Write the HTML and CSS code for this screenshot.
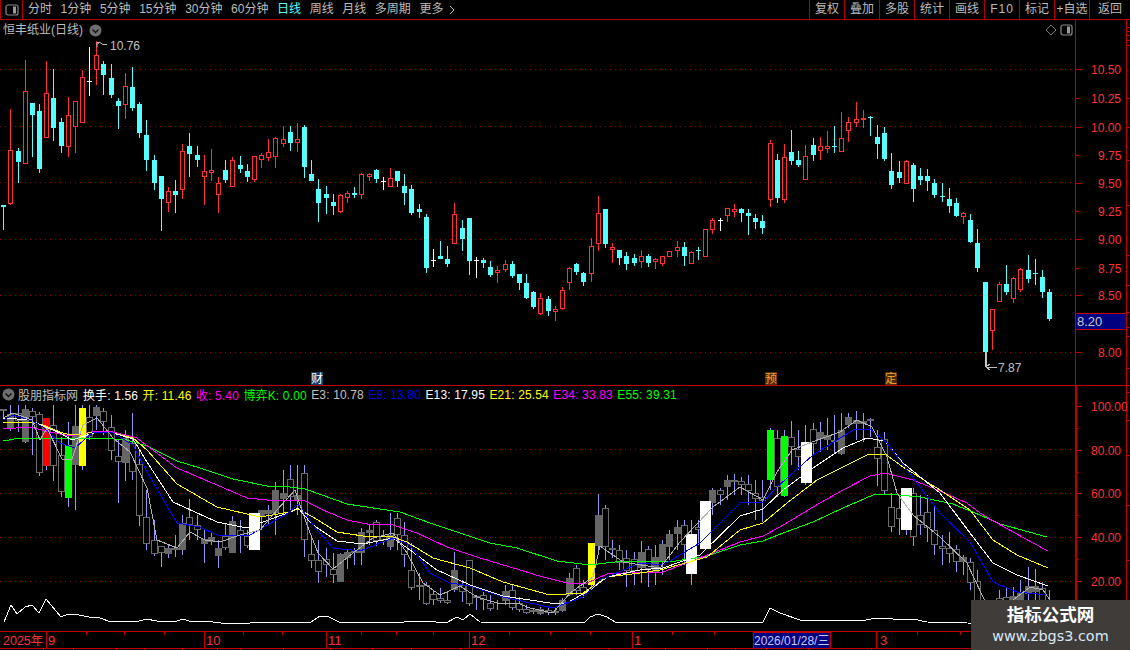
FILE: index.html
```html
<!DOCTYPE html>
<html lang="zh">
<head>
<meta charset="utf-8">
<title>恒丰纸业(日线)</title>
<link rel="stylesheet" href="styles.css">
</head>
<body>
<div class="app">
  <header class="toolbar">
    <div class="toggle">
      <svg width="14" height="12" viewBox="0 0 14 12"><rect x="1" y="1" width="12" height="10" rx="2" class="ico-line"/><rect x="8" y="2.5" width="3" height="7" class="ico-fill"/></svg>
    </div>
    <nav class="periods">
      <span>分时</span><span>1分钟</span><span>5分钟</span><span>15分钟</span><span>30分钟</span><span>60分钟</span><span class="active">日线</span><span>周线</span><span>月线</span><span>多周期</span>
      <span class="more">更多<svg width="6" height="10" viewBox="0 0 6 10"><path d="M1 1 5 5 1 9" class="chev"/></svg></span>
    </nav>
    <nav class="actions">
      <span>复权</span><span>叠加</span><span>多股</span><span>统计</span><span>画线</span><span class="wide">F10</span><span>标记</span><span>+自选</span><span class="last">返回</span>
    </nav>
  </header>

  <section class="pane pane-main">
    <svg id="main-chart" class="chart" width="1075" height="366" viewBox="0 20 1075 366"></svg>
    <svg id="main-axis" class="axis" width="55" height="366" viewBox="1075 20 55 366"></svg>
    <div class="pane-title">
      <span>恒丰纸业(日线)</span>
      <svg class="round" width="13" height="13" viewBox="0 0 13 13"><circle cx="6.5" cy="6.5" r="6" class="round-bg"/><path d="M3.5 5.5 6.5 8.500 9.500 5.500" class="round-mark"/></svg>
    </div>
    <div class="pane-tools">
      <svg width="12" height="12" viewBox="0 0 12 12"><path d="M6 1 11 6 6 11 1 6Z" class="ico-thin"/></svg>
      <svg width="13" height="12" viewBox="0 0 13 12"><rect x="1" y="1" width="11" height="10" rx="2" class="ico-line"/><rect x="7" y="2.5" width="3" height="7" class="ico-fill"/></svg>
    </div>
  </section>

  <section class="pane pane-sub">
    <svg id="sub-chart" class="chart" width="1075" height="245" viewBox="0 386 1075 245"></svg>
    <svg id="sub-axis" class="axis" width="55" height="245" viewBox="1075 386 55 245"></svg>
    <div class="legend">
      <svg class="round" width="13" height="13" viewBox="0 0 13 13"><circle cx="6.5" cy="6.5" r="6" class="round-bg"/><path d="M3.5 5.5 6.5 8.500 9.500 5.500" class="round-mark"/></svg>
      <span class="lg-name">股朋指标网</span>
      <span class="lg-white">换手: 1.56</span>
      <span class="lg-yellow">开: 11.46</span>
      <span class="lg-magenta">收: 5.40</span>
      <span class="lg-green">博弈K: 0.00</span>
      <span class="lg-grey">E3: 10.78</span>
      <span class="lg-blue">E8: 13.80</span>
      <span class="lg-white">E13: 17.95</span>
      <span class="lg-yellow">E21: 25.54</span>
      <span class="lg-magenta">E34: 33.83</span>
      <span class="lg-green">E55: 39.31</span>
    </div>
  </section>

  <footer class="timeline">
    <svg id="time-axis" width="1130" height="19" viewBox="0 631 1130 19"></svg>
  </footer>

  <aside class="watermark">
    <strong>指标公式网</strong>
    <span>www.zbgs3.com</span>
  </aside>
</div>
<script src="script.js"></script>
</body>
</html>
```

FILE: styles.css
```css
* { box-sizing: border-box; }
html, body { margin: 0; padding: 0; background: #000; }
body {
  width: 1130px; height: 650px; overflow: hidden;
  font-family: "Liberation Sans", "Noto Sans CJK SC", sans-serif;
  font-size: 12px; color: #bcbcbc;
}
.app { position: relative; width: 1130px; height: 650px; display: flex; flex-direction: column; }

.toolbar { height: 20px; display: flex; align-items: stretch; border-bottom: 1px solid #b00000; flex: none; }
.toggle { width: 23px; display: flex; align-items: center; justify-content: center; border-right: 1px solid #b00000; border-left: 1px solid #b00000; }
.periods { display: flex; align-items: center; gap: 8.6px; padding-left: 5px; line-height: 19px; }
.periods .active { color: #55ffff; }
.more { display: flex; align-items: center; gap: 6px; }
.chev { fill: none; stroke: #bcbcbc; stroke-width: 1; }
.actions { margin-left: auto; display: flex; }
.actions span { width: 35px; border-left: 1px solid #b00000; text-align: center; line-height: 19px; }
.actions .wide { letter-spacing: 1px; }
.actions .last { width: 41px; }

.ico-line { fill: none; stroke: #8a8a8a; stroke-width: 1.2; }
.ico-fill { fill: #9a9a9a; }
.ico-thin { fill: none; stroke: #777; stroke-width: 1; }
.round-bg { fill: #6e6e6e; }
.round-mark { fill: none; stroke: #111; stroke-width: 1.4; }

.pane { position: relative; display: flex; flex: none; }
.pane-main { height: 366px; }
.pane-sub { height: 245px; }
.chart, .axis { display: block; flex: none; }

.pane-title { position: absolute; left: 3px; top: 1px; display: flex; align-items: center; gap: 6px; font-size: 12px; line-height: 18px; }
.pane-tools { position: absolute; right: 57px; top: 4px; display: flex; align-items: center; gap: 3px; }

.legend { position: absolute; left: 2px; top: 0; height: 17px; display: flex; align-items: center; font-size: 12px; letter-spacing: 0.15px; white-space: nowrap; }
.legend span { margin-left: 4.4px; }
.legend .lg-name { margin-left: 3px; margin-right: 0.5px; color: #c0c0c0; letter-spacing: 0; }
.lg-white { color: #fff; }
.lg-yellow { color: #ffff00; }
.lg-magenta { color: #ff00ff; }
.lg-green { color: #00ff00; }
.lg-grey { color: #c0c0c0; }
.lg-blue { color: #0000e6; }

.timeline { height: 19px; flex: none; }
.timeline svg { display: block; }

.watermark {
  position: absolute; left: 971px; top: 600px; width: 159px; height: 50px;
  background: #403c3a; display: flex; flex-direction: column; align-items: center;
  padding-top: 4px;
}
.watermark strong { font-size: 17.5px; line-height: 22px; color: #fff; font-weight: 700; }
.watermark span { line-height: 20px; color: #dbe8f5; font-family: "DejaVu Sans", sans-serif; font-size: 14.4px; }

/* drawn marks */
.line { fill: none; stroke-width: 1; }
.grid { stroke: #a00000; stroke-dasharray: 1 4; shape-rendering: crispEdges; }
.axis-text { fill: #ff3232; font-size: 12px; }
.now-text { fill: #c8c8c8; font-size: 13px; }
.time-text { fill: #ff3232; font-size: 13px; }
.year-text { fill: #ff3232; font-size: 12.5px; }
.date-text { fill: #c8c8ff; font-size: 12px; }
.note-text { fill: #c0c0c0; font-size: 12px; }
.badge-text { font-size: 12px; text-anchor: middle; }
.badge-blue { fill: #fff; }
.badge-orange { fill: #ff9a28; }
```

FILE: script.js
```js
var RED = '#ff3232', CYAN = '#55ffff', AX = '#c00000';
function X(i) { return Math.round(3.2 + 7.163 * i); }
function ln(x1, y1, x2, y2, c, cls) {
  return '<line x1="' + x1 + '" y1="' + y1 + '" x2="' + x2 + '" y2="' + y2 + '" stroke="' + c + '"' + (cls ? ' class="' + cls + '"' : ' shape-rendering="crispEdges"') + '/>';
}
function box(x, y, w, h, fill, stroke) {
  return '<rect x="' + x + '" y="' + y + '" width="' + w + '" height="' + h + '" fill="' + fill + '"' + (stroke ? ' stroke="' + stroke + '"' : '') + ' shape-rendering="crispEdges"/>';
}
function poly(pts, c) {
  return '<polyline class="line" stroke="' + c + '" shape-rendering="crispEdges" points="' + pts + '"/>';
}
function txt(x, y, s, cls) {
  return '<text x="' + x + '" y="' + y + '" class="' + cls + '">' + s + '</text>';
}

/* main candles: type, high, body top, body bottom, low */
var K = [
['c',205,205,207,230],['r',109,150,204,205],['c',148,151,162,183],['r',60,91,164,164],['c',103,103,115,157],
['c',104,111,169,173],['r',61,93,138,138],['c',69,98,128,141],['c',118,122,146,153],['r',97,115,147,157],
['r',101,101,127,153],['r',70,77,123,123],['w',47,81,81,96],['r',41,55,70,85],['c',61,64,75,95],
['c',64,78,95,98],['c',98,101,106,129],['r',73,86,105,119],['c',67,87,108,111],['c',102,104,133,138],
['c',120,135,160,171],['c',155,160,183,190],['c',176,176,199,231],['r',187,191,203,212],['c',180,191,195,213],
['r',144,151,190,199],['c',133,146,154,177],['c',146,155,160,167],['r',155,171,177,205],['r',149,170,173,181],
['r',177,183,195,213],['c',160,170,180,183],['r',157,160,187,187],['c',156,165,169,173],['c',164,171,177,182],
['r',156,156,180,182],['r',153,155,160,168],['r',139,152,158,161],['r',137,138,157,168],['r',126,139,144,147],
['c',126,132,143,151],['r',123,139,143,152],['c',125,127,167,178],['c',160,174,181,181],['c',179,189,203,222],
['c',186,194,198,214],['c',194,202,206,215],['r',194,195,212,213],['r',191,193,198,203],['c',187,193,195,198],
['r',173,174,195,199],['r',173,174,177,181],['c',169,170,179,183],['w',177,181,181,190],['r',168,178,187,187],
['c',171,171,181,187],['c',174,186,193,205],['c',185,189,213,215],['c',204,209,212,218],['c',214,217,268,273],
['w',249,260,260,267],['c',241,256,259,259],['c',246,259,264,267],['r',203,214,244,244],['c',220,228,239,251],
['c',218,218,261,275],['w',257,260,260,278],['c',258,260,263,268],['c',261,267,275,277],['r',266,270,273,283],
['r',260,264,270,272],['c',261,264,276,278],['c',274,274,283,290],['c',274,283,298,299],['c',291,292,307,309],
['r',293,298,314,315],['c',296,299,311,316],['r',306,309,312,321],['r',287,290,309,310],['r',267,268,283,290],
['c',263,264,272,275],['c',272,273,282,286],['r',238,246,274,282],['r',196,213,244,251],
['c',209,209,244,248],['r',243,247,250,263],['c',250,250,258,265],['c',252,256,264,270],['c',254,258,263,266],
['r',250,256,262,268],['c',254,256,263,267],['r',258,259,262,269],['r',256,256,264,266],['r',251,251,257,257],
['r',241,247,251,257],['c',242,247,256,266],['r',251,252,264,264],['d',247,250,250,260],['r',229,229,257,257],
['r',218,220,230,234],['w',218,220,220,231],['r',208,208,216,222],['r',204,209,212,217],['c',208,209,213,222],
['c',209,213,216,235],['c',214,218,222,229],['c',215,221,228,234],['r',140,143,200,207],['c',154,160,198,203],
['r',144,157,200,203],['c',130,152,161,165],['c',151,160,165,167],['r',145,156,180,180],['c',138,145,155,161],
['r',137,146,151,160],['r',131,146,149,153],['d',126,146,146,153],['r',112,138,152,152],['r',117,122,131,142],
['r',102,119,123,127],['R',110,118,120,128],['d',116,117,117,136],['c',125,137,144,159],['c',127,133,159,161],
['c',153,171,185,189],['c',161,172,178,183],['r',160,161,184,184],['c',163,165,189,202],['c',168,176,180,185],
['c',169,176,181,191],['c',179,183,195,198],['d',183,196,196,202],['c',188,199,206,213],['c',198,203,216,217],
['r',212,213,217,224],['c',214,220,242,243],['c',229,243,268,272],['c',282,282,352,367],['r',309,309,331,350],
['r',282,284,302,302],['c',265,284,292,295],['r',277,278,299,303],['r',268,269,290,292],['c',255,270,279,283],
['d',259,273,273,285],['c',270,277,292,298],['c',289,292,319,321]
];

var main = '';
[69, 126, 182, 239, 295, 352].forEach(function (y) { main += ln(0, y + .5, 1075, y + .5, '', 'grid'); });
K.forEach(function (k, i) {
  var t = k[0], x = X(i), hi = k[1], top = k[2], bot = k[3], lo = k[4];
  if (t === 'c') {
    main += box(x, hi, 1, lo - hi, CYAN) + box(x - 2, top, 5, bot - top, CYAN);
  } else if (t === 'r') {
    main += box(x, hi, 1, top - hi, RED) + box(x, bot, 1, lo - bot, RED);
    main += box(x - 1.5, top + .5, 4, bot - top - 1, '#000', RED);
  } else if (t === 'R') {
    main += box(x, hi, 1, lo - hi, RED) + box(x - 2, top, 5, bot - top, RED);
  } else {
    var c = t === 'w' ? '#fff' : CYAN;
    main += box(x, hi, 1, lo - hi, c) + box(x - 2, top, 5, 1, c);
  }
});
/* high / low notes */
main += '<path d="M97 47V42.5H100L103 44.5H107M100 42 97.500 44" fill="none" stroke="#c0c0c0"/>' + txt(110, 50, '10.76', 'note-text');
main += '<path d="M986 352V367M986 367H997M990 364 986 367 990 370" fill="none" stroke="#c0c0c0" shape-rendering="crispEdges"/>' + txt(998, 372, '7.87', 'note-text');
/* event badges */
main += box(311, 372, 12, 13, '#123a66') + txt(317, 383, '财', 'badge-text badge-blue');
main += box(765, 372, 12, 13, '#4a2c08') + txt(771, 383, '预', 'badge-text badge-orange');
main += box(885, 372, 12, 13, '#4a2c08') + txt(891, 383, '定', 'badge-text badge-orange');
main += ln(0, 385.5, 1075, 385.5, AX);
document.getElementById('main-chart').innerHTML = main;

var ax = ln(1075.5, 20, 1075.5, 386, AX) + ln(1126.5, 20, 1126.5, 386, AX);
[['10.50', 69], ['10.25', 98], ['10.00', 127], ['9.75', 155], ['9.50', 183], ['9.25', 211], ['9.00', 239], ['8.75', 268], ['8.50', 295], ['8.00', 352]].forEach(function (a) {
  var long = ['10.50', '10.00', '9.50', '9.00', '8.50', '8.00'].indexOf(a[0]) >= 0;
  ax += ln(1076, a[1] + .5, long ? 1082 : 1079, a[1] + .5, AX);
  ax += txt(a[0].length > 4 ? 1091 : 1098, a[1] + 5, a[0], 'axis-text');
});
[27, 31, 35, 40, 45, 98, 127, 160, 205, 255, 285, 312, 327, 336, 368].forEach(function (y) { ax += ln(1127, y + .5, 1130, y + .5, AX); });
ax += box(1076, 313, 50, 16, '#000080') + ln(1076, 313.5, 1127, 313.5, AX) + ln(1076, 329.5, 1127, 329.5, AX);
ax += txt(1077, 326, '8.20', 'now-text');
ax += ln(1075, 385.5, 1130, 385.5, AX);
document.getElementById('main-axis').innerHTML = ax;

/* lower panel candles: index, high, top, bottom, low, filled */
var S = [
[0,409,409,411,418,1],[1,405,414,429,431,1],[2,405,413,421,432,0],[3,405,409,442,443,1],[4,408,411,417,455,0],
[5,412,414,473,476,0],[6,420,425,466,470,0],[7,405,425,466,481,0],[8,437,455,492,497,0],[9,422,450,490,507,0],
[10,405,426,465,510,1],[11,405,416,460,470,0],[12,405,417,437,440,0],[13,405,407,416,430,1],[14,408,411,422,435,0],
[15,415,427,451,460,0],[16,440,456,462,503,0],[17,430,438,463,481,1],[18,413,443,472,480,0],[19,450,464,516,526,0],
[20,490,517,544,550,0],[21,520,540,554,556,0],[22,546,546,553,567,0],[23,545,548,554,558,1],[24,535,548,550,557,1],
[25,515,523,550,555,1],[26,499,517,525,540,0],[27,515,525,530,540,0],[28,530,539,544,563,1],[29,533,537,542,545,1],
[30,540,548,556,568,1],[31,523,536,548,550,0],[32,516,521,553,553,1],[33,520,530,536,553,0],[34,530,536,546,548,0],
[35,520,520,550,550,0],[36,510,510,517,530,1],[37,505,510,514,525,1],[38,482,490,513,535,1],[39,470,493,499,515,1],
[40,465,479,497,510,0],[41,465,495,500,515,1],[42,465,473,540,557,0],[43,535,554,561,568,0],[44,540,560,572,583,0],
[45,548,559,565,577,0],[46,553,569,575,583,0],[47,553,554,582,582,1],[48,550,552,558,569,1],[49,548,550,553,565,1],
[50,528,532,553,565,1],[51,525,530,533,545,1],[52,520,522,541,546,0],[53,530,536,540,545,0],[54,513,535,547,550,1],
[55,513,518,535,550,0],[56,522,535,555,567,0],[57,543,570,588,590,0],[58,573,585,587,600,0],[59,582,585,604,605,0],
[60,590,594,600,605,0],[61,588,598,601,603,0],[62,592,600,603,604,0],[63,552,570,590,592,1],[64,580,585,592,602,0],
[65,560,560,604,606,0],[66,595,596,598,610,0],[67,592,595,600,610,0],[68,595,603,609,611,0],[69,600,603,604,610,0],
[70,585,591,601,605,1],[71,585,590,608,610,0],[72,597,603,610,612,0],[73,605,609,613,614,0],[74,608,610,612,614,0],
[75,607,609,614,615,1],[76,607,610,613,615,0],[77,608,611,613,615,0],[78,598,600,611,612,1],[79,573,578,595,596,1],
[80,565,568,591,595,0],[81,580,587,594,598,0],[82,560,565,585,590,0],[83,494,515,546,550,1],[84,505,508,547,560,0],
[85,540,548,550,558,1],[86,545,550,563,570,0],[87,550,558,571,587,0],[88,552,559,571,585,0],[89,541,552,568,583,1],
[90,546,549,569,587,0],[91,545,557,572,585,1],[92,540,544,562,575,1],[93,530,534,547,560,1],[94,520,527,534,550,1],
[95,520,525,545,565,0],[96,520,535,570,585,0],[97,520,527,530,545,0],[98,501,510,540,545,0],[99,488,490,503,515,1],
[100,488,490,495,505,0],[101,475,480,487,500,1],[102,474,480,482,495,0],[103,477,481,485,495,0],[104,475,484,491,505,0],
[105,480,493,499,520,0],[106,480,497,501,522,0],[107,428,440,475,490,0],[108,430,438,487,497,0],[109,430,440,490,497,0],
[110,421,437,447,465,0],[111,430,449,457,470,0],[112,425,445,475,485,0],[113,423,429,444,455,0],[114,422,432,439,452,1],
[115,418,435,440,450,1],[116,415,440,442,453,0],[117,413,430,454,455,1],[118,413,417,425,428,1],[119,411,420,424,440,1],
[120,413,421,424,442,1],[121,418,419,421,437,1],[122,430,447,459,486,0],[123,432,439,491,495,0],[124,493,507,527,532,0],
[125,495,508,519,535,0],[126,488,490,530,535,0],[127,488,493,537,546,0],[128,495,515,525,535,0],[129,495,512,528,542,0],
[130,507,530,545,555,0],[131,535,546,549,565,0],[132,532,548,554,563,0],[133,545,549,562,572,0],[134,555,557,562,575,1],
[135,558,562,583,590,0],[136,570,581,610,612,0],[139,590,598,610,612,0],[140,587,597,610,612,0],[141,587,596,610,612,1],
[142,580,593,610,612,1],[143,567,586,594,600,1],[144,569,586,592,605,1],[145,582,588,605,610,0],[146,590,600,610,612,0]
];
var WICK = '#9696f5', GR = '#6a6a6a', FILL = '#666666';
var sub = '';
[449, 493, 537, 581].forEach(function (y) { sub += ln(0, y + .5, 1075, y + .5, '', 'grid'); });
S.forEach(function (k) {
  var x = X(k[0]);
  sub += box(x, k[1], 1, k[4] - k[1], WICK);
  if (k[5]) sub += box(x - 3, k[2], 7, k[3] - k[2], FILL);
  else sub += box(x - 2.5, k[2] + .5, 6, k[3] - k[2] - 1, '#000', GR);
});
[[43, 418, 7, 48, '#ff0000'], [65, 445, 7, 53, '#00ff00'], [79, 408, 7, 58, '#ffff00'], [249, 513, 11, 37, '#fff'],
 [588, 543, 7, 42, '#ffff00'], [686, 534, 11, 40, '#fff'], [700, 501, 11, 48, '#fff'], [767, 430, 7, 50, '#00ff00'],
 [781, 436, 7, 60, '#00ff00'], [801, 442, 11, 41, '#fff'], [901, 488, 11, 42, '#fff']].forEach(function (b) {
  sub += box(b[0], b[1], b[2], b[3], b[4]);
});
sub += poly('3,441 20,438 40,438 80,439 100,438 127,440 147,446 177,461 200,468 233,479 267,486 290,487 305,489 333,499 347,504 373,508 400,512 430,523 457,532 490,543 517,548 557,561 590,565 623,561 670,562 707,556 740,545 763,541 783,533 813,522 843,508 873,495 887,494 920,497 953,504 980,515 1000,524 1047,537', '#00ff00');
sub += poly('3,429 30,427 50,432 70,436 97,431 113,432 137,438 150,448 177,468 217,485 247,498 267,500 290,500 303,500 323,510 347,520 367,524 393,525 417,533 447,547 480,558 510,567 543,577 567,583 587,583 607,574 640,572 663,572 700,558 740,542 763,536 780,527 813,507 843,490 870,476 885,473 913,480 940,491 967,503 980,513 997,523 1033,543 1048,551', '#ff00ff');
sub += poly('3,422 30,422 43,425 60,432 70,435 97,432 113,433 133,438 147,450 177,484 217,507 260,517 290,512 298,509 313,517 337,532 363,536 390,536 407,542 433,558 470,568 503,582 550,595 583,593 607,577 640,573 660,570 707,557 740,530 763,523 787,503 817,480 847,465 867,455 885,454 903,467 940,490 970,510 993,540 1017,555 1048,568', '#ffff00');
sub += poly('3,418 30,420 43,426 60,433 72,440 97,432 113,433 133,439 147,462 173,502 217,522 247,528 290,512 298,508 313,525 337,541 363,544 393,538 410,550 437,570 470,585 503,596 550,603 567,603 590,590 607,577 640,570 663,568 700,555 740,516 763,509 783,490 813,468 843,448 867,438 885,441 903,463 940,493 973,537 993,563 1017,575 1048,586', '#ffffff');
sub += poly('3,420 13,415 30,420 43,427 60,443 75,448 93,432 113,433 133,445 147,472 177,523 200,527 217,535 250,535 290,512 298,504 313,525 333,548 360,551 393,538 410,545 430,573 450,583 470,586 503,597 553,608 583,597 600,580 640,563 663,565 700,543 740,503 763,502 777,487 813,455 853,430 870,429 887,443 907,470 940,513 970,542 993,582 1017,592 1048,595', '#0000ff');
sub += poly('3,418 13,413 32,420 40,440 47,428 62,459 72,459 83,425 97,418 113,438 130,452 147,488 157,540 177,548 190,532 205,540 220,542 240,535 260,530 277,510 295,490 307,525 318,553 333,569 353,553 373,538 393,533 407,553 423,583 440,595 460,586 477,597 497,603 517,603 530,608 553,613 570,593 593,577 600,546 623,562 660,568 680,542 713,507 740,487 763,500 777,472 792,450 812,442 840,432 857,420 872,427 887,457 897,493 913,515 940,537 967,563 983,597 1000,625 1013,600 1030,587 1043,590 1050,600', '#b0b0b0');
sub += poly('4,622 11,605 17,614 25,607 32,605 39,613 46,599 61,617 68,614 79,615 89,617 100,618 111,622 118,621 136,622 146,619 157,621 168,621 175,622 182,619 193,622 204,621 221,623 250,623 257,622 271,623 279,622 311,622 320,616 329,617 339,622 357,622 404,622 425,621 446,623 457,617 463,620 470,614 480,622 557,623 585,622 590,617 598,614 607,617 615,622 700,622 720,623 763,622 770,608 780,613 800,620 833,620 860,621 877,618 893,619 913,619 927,622 967,623 1049,625', '#ffffff');
document.getElementById('sub-chart').innerHTML = sub;

var sx = box(1075, 386, 2, 245, AX) + ln(1126.5, 386, 1126.5, 631, AX);
[['100.00', 406], ['80.00', 450], ['60.00', 493], ['40.00', 537], ['20.00', 581]].forEach(function (a) {
  sx += ln(1076, a[1] + .5, 1082, a[1] + .5, AX);
  sx += txt(1091, a[1] + 5, a[0], 'axis-text');
});
[428, 472, 515, 559, 603].forEach(function (y) { sx += ln(1076, y + .5, 1079, y + .5, AX); });
[392, 420, 455, 505, 560, 600].forEach(function (y) { sx += ln(1127, y + .5, 1130, y + .5, AX); });
document.getElementById('sub-axis').innerHTML = sx;

var tm = ln(0, 631.5, 1130, 631.5, AX) + ln(0, 648.5, 1130, 648.5, AX);
[[46, '9', 47], [204, '10', 205], [326, '11', 327], [469, '12', 470], [632, '1', 633], [876, '3', 879]].forEach(function (a) {
  tm += ln(a[0] + .5, 631, a[0] + .5, 648, AX) + txt(a[2] + 1, 645, a[1], 'time-text');
});
tm += txt(3, 645, '2025年', 'year-text');
[86, 124, 164, 243, 282, 361, 396, 433, 509, 550, 590, 672, 714, 792, 917, 960, 1000, 1040].forEach(function (x) { tm += ln(x + .5, 632, x + .5, 635, AX); });
[43, 73, 116, 144, 182, 217, 240, 283, 330, 372, 411, 460, 520, 565, 608, 665, 707, 735, 766, 808, 871].forEach(function (x) { tm += ln(x + .5, 649, x + .5, 650, AX); });
tm += box(753, 632, 77, 16, '#000080', AX);
tm += txt(754, 645, '2026/01/28/三', 'date-text');
tm += box(1075, 631, 2, 19, AX);
document.getElementById('time-axis').innerHTML = tm;
```
